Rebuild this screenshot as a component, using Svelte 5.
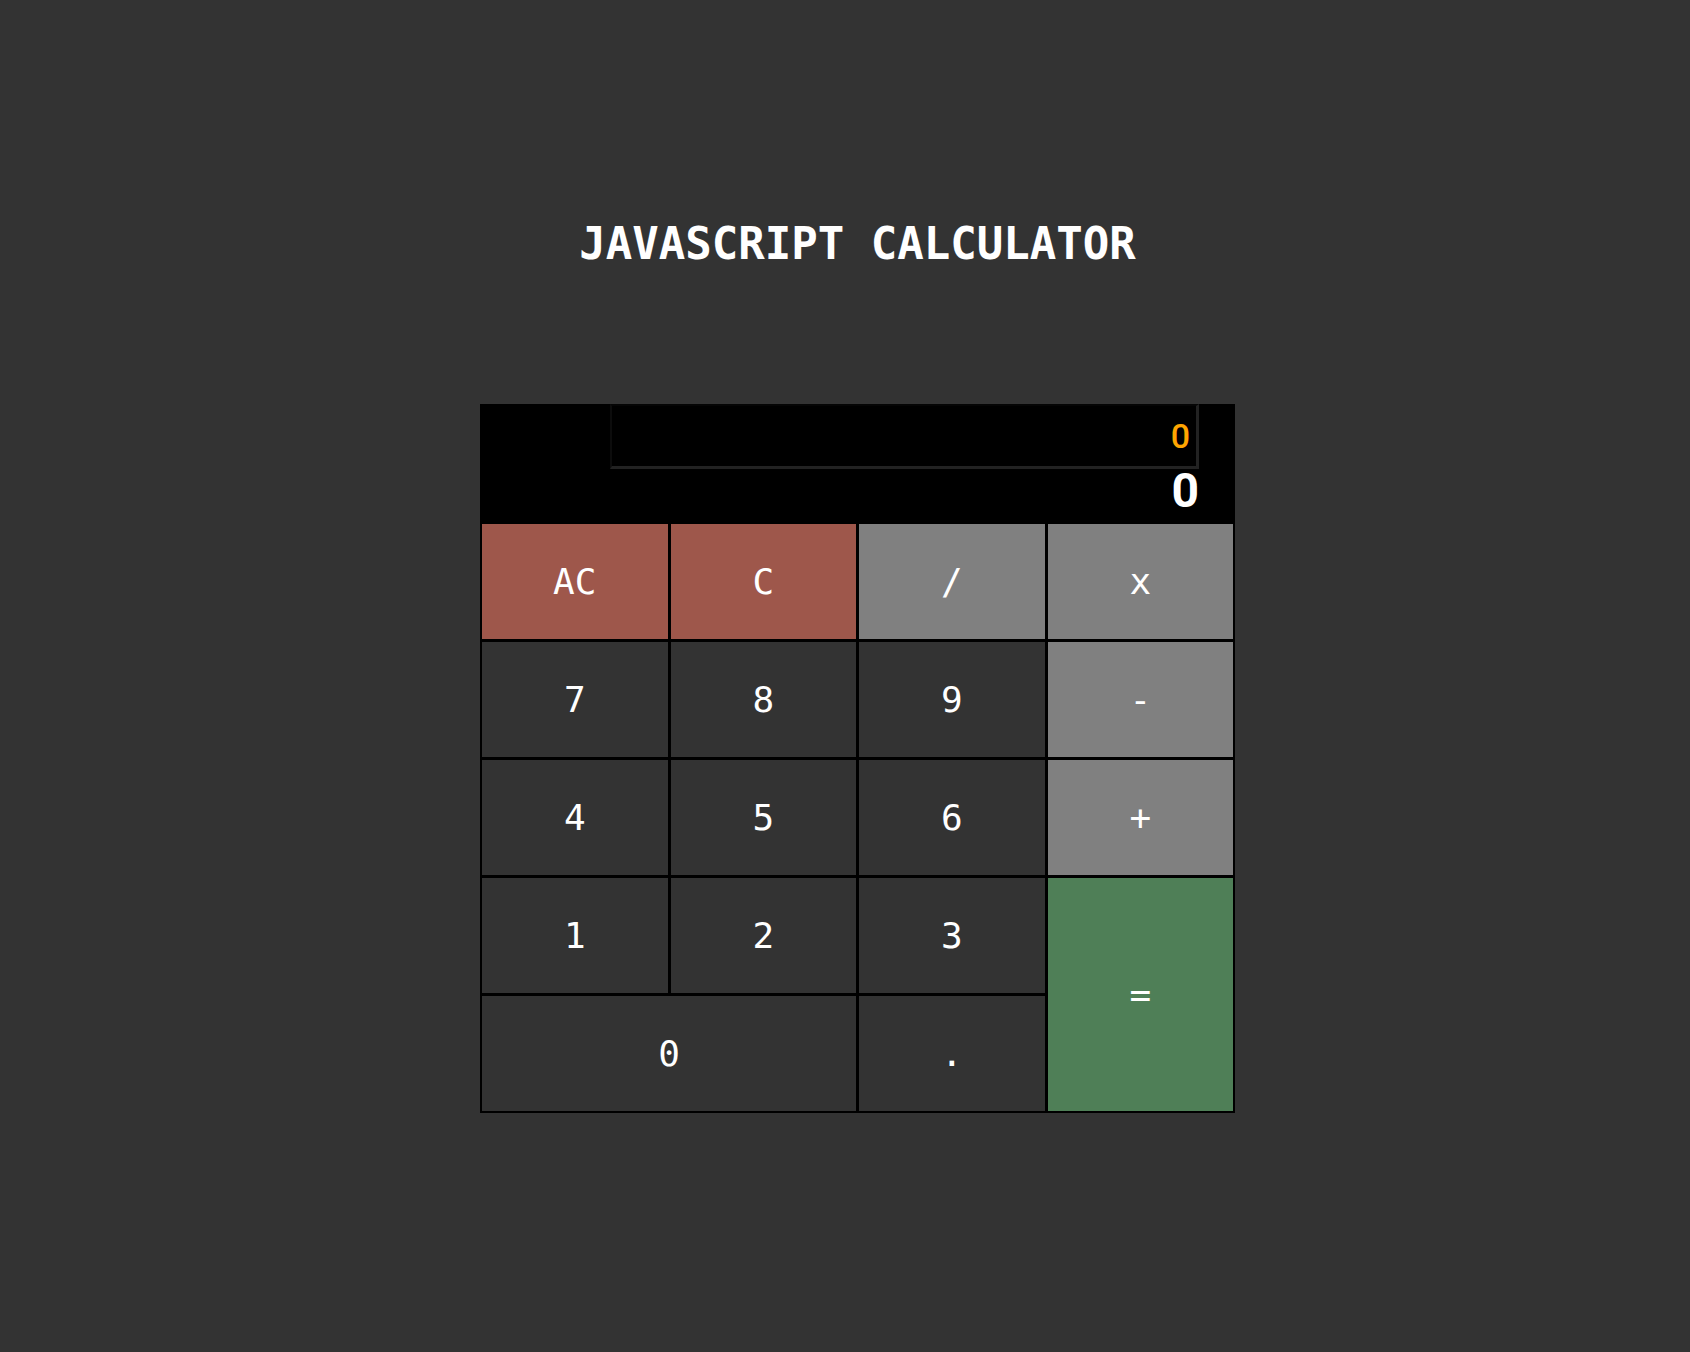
<script>
  const keys = [
    { label: 'AC', kind: 'clear' },
    { label: 'C', kind: 'clear' },
    { label: '/', kind: 'operator' },
    { label: 'x', kind: 'operator' },
    { label: '7' },
    { label: '8' },
    { label: '9' },
    { label: '-', kind: 'operator' },
    { label: '4' },
    { label: '5' },
    { label: '6' },
    { label: '+', kind: 'operator' },
    { label: '1' },
    { label: '2' },
    { label: '3' },
    { label: '=', kind: 'equals' },
    { label: '0', kind: 'zero' },
    { label: '.' }
  ];

  let formula = $state('0');
  let entry = $state('0');
  let total = 0;
  let pending = null;
  let fresh = true;

  function apply(a, op, b) {
    if (op === '+') return a + b;
    if (op === '-') return a - b;
    if (op === 'x') return a * b;
    if (op === '/') return a / b;
    return b;
  }

  function press(key) {
    if (key === 'AC') {
      formula = '0';
      entry = '0';
      total = 0;
      pending = null;
      fresh = true;
    } else if (key === 'C') {
      entry = '0';
      fresh = true;
    } else if ('+-x/='.includes(key)) {
      total = apply(total, pending, Number(entry));
      formula = key === '=' ? String(total) : `${total} ${key}`;
      entry = String(total);
      pending = key === '=' ? null : key;
      fresh = true;
    } else {
      if (key === '.' && !fresh && entry.includes('.')) return;
      entry = fresh ? (key === '.' ? '0.' : key) : entry + key;
      fresh = false;
    }
  }
</script>

<main>
  <h1>JAVASCRIPT CALCULATOR</h1>

  <section class="calculator" aria-label="Calculator">
    <div class="display">
      <output class="formula" aria-label="Formula">{formula}</output>
      <output class="entry" aria-label="Current value">{entry}</output>
    </div>
    <div class="keys">
      {#each keys as key}
        <button type="button" class={key.kind ?? 'digit'} onclick={() => press(key.label)}>{key.label}</button>
      {/each}
    </div>
  </section>
</main>

<style>
  :global(body) {
    margin: 0;
    background: #333;
  }

  main {
    box-sizing: border-box;
    min-height: 100vh;
    padding: 214px 0 64px 25px;
    display: flex;
    flex-direction: column;
    align-items: center;
    gap: 130px;
    color: #fff;
  }

  h1 {
    margin: 0;
    font: 700 44px/60px 'DejaVu Sans Mono', monospace;
    text-align: center;
  }

  .calculator {
    box-sizing: border-box;
    width: 100%;
    max-width: 755px;
    background: #000;
  }

  .display {
    box-sizing: border-box;
    height: 120px;
    padding: 0 36px 0 130px;
    display: flex;
    flex-direction: column;
    font-family: Roboto, sans-serif;
    font-weight: 700;
    text-align: right;
  }

  .formula {
    padding: 0 6px;
    border: solid #222;
    border-width: 2px 3px 3px 2px;
    border-top-color: #050505;
    border-left-color: #0c0c0c;
    font-size: 34px;
    font-weight: 500;
    line-height: 60px;
    color: #ffa500;
  }

  .entry {
    font-size: 48px;
    line-height: 44px;
  }

  .keys {
    padding: 0 2px 2px;
    display: grid;
    grid-template-columns: repeat(4, 1fr);
    grid-auto-rows: 115px;
    gap: 3px;
  }

  button {
    margin: 0;
    padding: 0;
    border: 0;
    background: #333;
    color: #fff;
    font: 36px/40px 'DejaVu Sans Mono', monospace;
    cursor: pointer;
  }

  .clear {
    background: #9e574b;
  }

  .operator {
    background: #808080;
  }

  .equals {
    grid-row: span 2;
    background: #4f7f57;
  }

  .zero {
    grid-column: span 2;
  }
</style>
